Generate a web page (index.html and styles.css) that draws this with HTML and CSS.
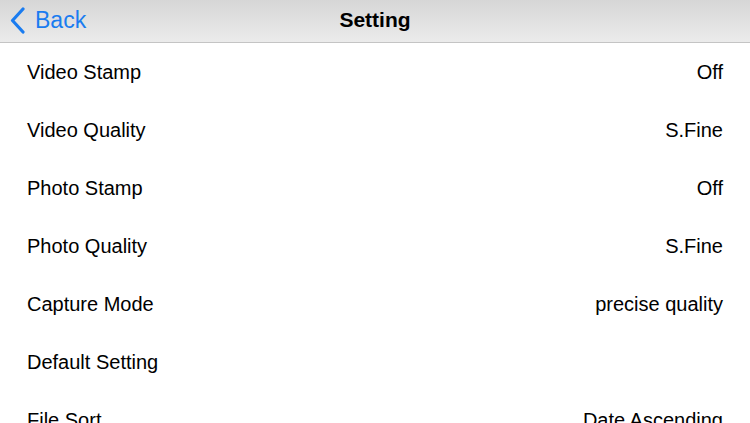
FILE: index.html
```html
<!DOCTYPE html>
<html>
<head>
<meta charset="utf-8">
<link rel="stylesheet" href="styles.css">
</head>
<body>
<div class="screen">
  <header class="navbar">
    <div class="back">
      <svg class="chevron" width="17" height="27" viewBox="0 0 17 27"><path d="M14 2 L3.5 13.5 L14 25" fill="none" stroke="#1a7cf0" stroke-width="3.2" stroke-linecap="round" stroke-linejoin="round"/></svg>
      <span class="back-label">Back</span>
    </div>
    <div class="title">Setting</div>
  </header>
  <ul class="list">
    <li class="row"><span class="label">Video Stamp</span><span class="value">Off</span></li>
    <li class="row"><span class="label">Video Quality</span><span class="value">S.Fine</span></li>
    <li class="row"><span class="label">Photo Stamp</span><span class="value">Off</span></li>
    <li class="row"><span class="label">Photo Quality</span><span class="value">S.Fine</span></li>
    <li class="row"><span class="label">Capture Mode</span><span class="value">precise quality</span></li>
    <li class="row"><span class="label">Default Setting</span><span class="value"></span></li>
    <li class="row"><span class="label">File Sort</span><span class="value">Date Ascending</span></li>
  </ul>
</div>
</body>
</html>
```

FILE: styles.css
```css
html, body {
  margin: 0;
  padding: 0;
  background: #ffffff;
}
body {
  font-family: "Liberation Sans", Arial, sans-serif;
  color: #000;
}
.screen {
  width: 750px;
  height: 423px;
  overflow: hidden;
}
.navbar {
  height: 42px;
  border-bottom: 1px solid #c4c4c4;
  background: linear-gradient(#d6d6d6, #ebebeb);
  display: flex;
  align-items: center;
  justify-content: center;
  position: relative;
}
.back {
  position: absolute;
  left: 9px;
  top: 0;
  height: 42px;
  display: flex;
  align-items: center;
  gap: 9px;
  color: #1a7cf0;
}
.chevron {
  display: block;
  margin-top: -2px;
}
.back-label {
  font-size: 23px;
  line-height: 1;
  margin-top: -1px;
}
.title {
  font-size: 21px;
  font-weight: bold;
  line-height: 1;
  margin-top: -3px;
}
.list {
  list-style: none;
  margin: 0;
  padding: 0;
}
.row {
  height: 58px;
  display: flex;
  align-items: center;
  justify-content: space-between;
  padding: 0 27px;
  font-size: 20px;
}
.row span {
  line-height: 1;
  margin-top: -1px;
}
```
